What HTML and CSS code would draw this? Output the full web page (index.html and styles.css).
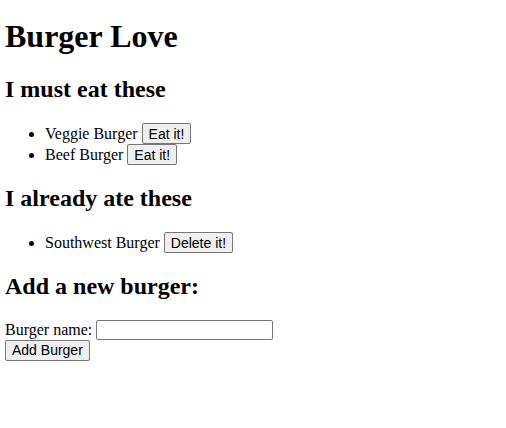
FILE: index.html
```html
<!DOCTYPE html>
<html>
<head>
<meta charset="utf-8">
<title>Burger Love</title>
<link rel="stylesheet" href="styles.css">
</head>
<body class="page">
<h1 class="title">Burger Love</h1>
<h2 class="section">I must eat these</h2>
<ul class="list">
<li class="item">Veggie Burger <button class="btn">Eat it!</button></li>
<li class="item">Beef Burger <button class="btn">Eat it!</button></li>
</ul>
<h2 class="section">I already ate these</h2>
<ul class="list">
<li class="item">Southwest Burger <button class="btn">Delete it!</button></li>
</ul>
<h2 class="section">Add a new burger:</h2>
<form class="form">
<label for="bn">Burger name:</label> <input id="bn" class="field" type="text"><br>
<button class="btn" type="button">Add Burger</button>
</form>
</body>
</html>
```
FILE: styles.css
```css
html { background: #fff; }
.page {
  margin: 5px;
  font-family: "Liberation Serif", "Times New Roman", serif;
  font-size: 16px;
  color: #000;
}
.title {
  font-size: 32px;
  font-weight: bold;
  margin: 13px 0 21.44px;
}
.section {
  font-size: 24px;
  font-weight: bold;
  margin: 19.92px 0;
}
.list {
  margin: 16px 0 15px;
  padding-left: 40px;
}
.item { height: 21px; }
.btn {
  box-sizing: border-box;
  font-family: "Liberation Sans", Arial, sans-serif;
  font-size: 14px;
  color: #000;
  background: #efefef;
  border: 1px solid #767676;
  border-radius: 2px;
  height: 21px;
  padding: 0 6px;
  margin: 0;
}
.form { margin: 0; }
.field {
  box-sizing: border-box;
  font-family: "Liberation Sans", Arial, sans-serif;
  font-size: 13.33px;
  width: 177px;
  height: 20px;
  padding: 1px 2px;
  border: 1px solid #767676;
  border-radius: 2px;
  margin: 0;
  vertical-align: baseline;
}
```
